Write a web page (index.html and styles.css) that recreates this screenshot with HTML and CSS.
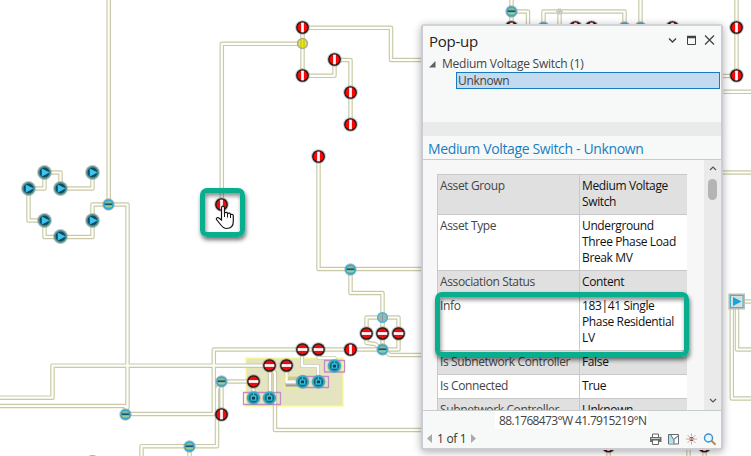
FILE: index.html
```html
<!DOCTYPE html>
<html lang="en">
<head>
<meta charset="utf-8">
<title>Network map</title>
<link rel="stylesheet" href="styles.css">
</head>
<body>
<main class="stage">
<svg class="map" width="751" height="456" viewBox="0 0 751 456">
  <defs>
    <g id="open"><circle r="7.3" class="halo"/><circle r="5.7" fill="#f80808" stroke="#181818" stroke-width="1.3"/><path d="M0-4.8V4.8" stroke="#fff" stroke-width="2.7"/></g>
    <g id="closed"><circle r="7.3" class="halo"/><circle r="5.7" fill="#f80808" stroke="#181818" stroke-width="1.3"/><path d="M-4.8 0H4.8" stroke="#fff" stroke-width="2.7"/></g>
    <g id="arrow"><circle r="7.4" class="halo"/><circle r="5.7" fill="#174952" stroke="#4d9499" stroke-width="1.5"/><path d="M-2.7-4L5 0L-2.7 4Z" fill="#38c5fa"/></g>
    <g id="junction"><circle r="6.2" class="halo"/><circle r="4.5" fill="#83b79a" stroke="#25a9d8" stroke-width="1.5"/><path d="M-3.7-.3H3.7" stroke="#15506c" stroke-width="1.5"/><path d="M-3.5 2H3.5" stroke="#98cd92" stroke-width="1"/></g>
    <g id="meter"><circle r="7.1" class="halo"/><circle r="5.6" fill="#176274" stroke="#2caccb" stroke-width="1.7"/><path d="M-2.2-2H2.2V2.2H-2.2ZM0-5V-2" fill="#103d4a" stroke="#36bfe0" stroke-width="1.3"/></g>
    <g id="pipes">
      <path d="M302.5 27.8H391V60H425M302.5 43.8H221.8V204M302.5 27.5V75.8H334.5V60H350.5V124M318.5 156V269H425M350.5 269V293H382.5V317M366.5 333V317.5H398.5V349.5H382.5V317M366.5 333V343L375 344L382.5 349.5L390 355H425"/>
      <path d="M382.5 349.5H213.8V414H125.5M108.7 0V204.5H127.5V407L125.5 414M0 406H125.5V414"/>
      <path d="M0 397.7H52.5V365.7H270V398M270 366L275 373V430H425M221.5 381.5L217 389V446.2H141.5V456M189.5 446V456M221.5 381.5V414M221.5 381.5H253.5V398"/>
      <path d="M28.5 188.5H44.5V172.5H60.5V188.5H92.5V172.5M28.5 188.5V220.5H44.5V237H92.5V204.5H108.5"/>
      <path d="M511.5 0V26M511.5 11.5H528V26M543.5 26V11.5H624.5V26M559.5 11.5V26M640.5 0V26M736.5 0V76H721M755 91.8H723.5M721 172.5H755M608.5 448V456M688.5 448V456M704.5 448V456M755 301.5H737V349.5H755M731.8 302V398.5H755"/>
    </g>
  </defs>
  <rect x="246" y="358" width="97" height="48" class="substation"/>
  <use href="#pipes" class="pipe-edge"/>
  <use href="#pipes" class="pipe-core"/>
  <g class="thin-edge"><path d="M302 350V366H318V381M318.5 350V358H334.5V366M286.5 366V384H302M286.5 378H302"/></g>
  <g class="thin-core"><path d="M302 350V366H318V381M318.5 350V358H334.5V366M286.5 366V382H302"/></g>
  <path d="M303 376H284V388H303" fill="none" stroke="#f3f27d"/>
  <path d="M286 385.5H302" stroke="#9c9d98" stroke-width="2"/>
  <g class="container"><path d="M247 392.5H243.5V404.5H247M247 392.5H280.5V404.5H247M303 376.5H328.5V387.5H303M324.5 360.5H344.5V372H324.5Z"/></g>

  <g>
    <use href="#open" x="302.5" y="27.5"/><use href="#open" x="302.5" y="75.5"/><use href="#open" x="334.5" y="59.5"/><use href="#open" x="350.5" y="92.5"/><use href="#open" x="350.5" y="124.5"/><use href="#open" x="318.5" y="156.5"/><use href="#open" x="221.5" y="204.5"/><use href="#open" x="350.5" y="349.5"/><use href="#open" x="221.5" y="414.5"/>
    <use href="#open" x="736.5" y="27.5"/><use href="#open" x="736.5" y="75.5"/><use href="#open" x="511.5" y="27.5"/><use href="#open" x="575.5" y="27.5"/><use href="#open" x="591.5" y="27.5"/><use href="#open" x="672.5" y="27.5"/><use href="#open" x="608.5" y="446"/><use href="#open" x="704.5" y="446"/>
    <use href="#closed" x="366.5" y="333.5"/><use href="#closed" x="382.5" y="333.5"/><use href="#closed" x="398.5" y="333.5"/><use href="#closed" x="302.5" y="349.5"/><use href="#closed" x="318.5" y="349.5"/><use href="#closed" x="269.5" y="365.5"/><use href="#closed" x="286.5" y="365.5"/><use href="#closed" x="253.5" y="381.5"/>
    <use href="#arrow" x="28.5" y="188.5"/><use href="#arrow" x="44.5" y="172.5"/><use href="#arrow" x="60.5" y="188.5"/><use href="#arrow" x="92.5" y="172.5"/><use href="#arrow" x="92.5" y="220.5"/><use href="#arrow" x="60.5" y="236.5"/><use href="#arrow" x="44.5" y="220.5"/>
    <use href="#junction" x="108.5" y="204.5"/><use href="#junction" x="350.5" y="269.5"/><use href="#junction" x="382.5" y="349.5"/><use href="#junction" x="221.5" y="381.5"/><use href="#junction" x="125.5" y="414.5"/><use href="#junction" x="189.5" y="446.5"/><use href="#junction" x="511.5" y="11.5"/><use href="#junction" x="543.5" y="27.5"/><use href="#junction" x="624.5" y="27.5"/><use href="#junction" x="640.5" y="27.5"/>
    <use href="#meter" x="253.5" y="398"/><use href="#meter" x="269.5" y="398"/><use href="#meter" x="302.5" y="381.8"/><use href="#meter" x="318.5" y="381.8"/><use href="#meter" x="334.5" y="366"/>
  </g>
  <circle cx="302.5" cy="43.5" r="4.8" fill="#eeee18" stroke="#aaaaa2" stroke-width="1.7"/><path d="M301 40V47M304 40V47" stroke="#b5b51f"/>
  <circle cx="382.5" cy="317.5" r="4.8" fill="#9fb5a7" stroke="#47b4d9" stroke-width="1.5"/><path d="M382.5 314V321" stroke="#7d9c9c"/>
  <path d="M556 11.5L558 8.500H561L563 11.500L561 14.500H558Z" fill="#c5cebc"/>
  <path d="M88.500 456Q92.500 454 96.500 456" fill="#aaa"/>
  <rect x="728.5" y="293.5" width="16.5" height="16" fill="#b9bebc"/><rect x="730.5" y="295.5" width="12.5" height="12" fill="#d5dfdb" stroke="#49b5bd"/><path d="M733 297L741.5 301.500L733 306Z" fill="#18a3df"/>
</svg>

<section class="popup">
  <header class="titlebar"><h1>Pop-up</h1>
    <svg width="50" height="16" viewBox="0 0 50 16" fill="none" stroke="#404040"><path d="M2 5.500L5.500 9L9 5.500" stroke-width="1.400"/><path d="M20.500 4H28.500V11.500H20.500Z"/><path d="M20 4H29" stroke-width="2.500"/><path d="M38 2.500L47 11.500M47 2.500L38 11.500" stroke-width="1.200"/></svg>
  </header>
  <div class="tree">
    <div class="tree-parent"><svg width="7" height="7"><path d="M6.500 0V6.500H0Z" fill="#616161"/></svg><span>Medium Voltage Switch (1)</span></div>
    <div class="tree-item"><span>Unknown</span></div>
  </div>
  <div class="splitter"></div>
  <h2><span>Medium Voltage Switch - Unknown</span></h2>
  <div class="content">
    <div class="scroll-view">
      <dl class="fields">
        <dt>Asset Group</dt><dd>Medium Voltage<br>Switch</dd>
        <dt class="alt">Asset Type</dt><dd class="alt">Underground<br>Three Phase Load<br>Break MV</dd>
        <dt>Association Status</dt><dd>Content</dd>
        <dt class="alt">Info</dt><dd class="alt">183|41 Single<br>Phase Residential<br>LV</dd>
        <dt>Is Subnetwork Controller</dt><dd>False</dd>
        <dt class="alt">Is Connected</dt><dd class="alt">True</dd>
        <dt>Subnetwork Controller</dt><dd>Unknown</dd>
      </dl>
    </div>
    <div class="scrollbar">
      <svg width="8" height="5"><path d="M1 4L4 1L7 4" fill="none" stroke="#555" stroke-width="1.200"/></svg>
      <div class="thumb"></div>
      <svg width="8" height="5"><path d="M1 1L4 4L7 1" fill="none" stroke="#555" stroke-width="1.200"/></svg>
    </div>
  </div>
  <footer>
    <div class="coords"><span>88.1768473°W 41.7915219°N</span></div>
    <div class="actions">
      <div class="pager"><svg width="5" height="9"><path d="M5 0V9L0 4.500Z" fill="#aaa"/></svg><span>1 of 1</span><svg width="5" height="9"><path d="M0 0V9L5 4.500Z" fill="#aaa"/></svg></div>
      <svg width="68" height="14" viewBox="0 0 68 14" fill="none">
        <path d="M3.500 5V2H9.500V5" fill="#fff" stroke="#666"/><path d="M1 5H12.500V10H1Z" fill="#6a6e71"/><path d="M3.500 8H9.500V12.500H3.500Z" fill="#fff" stroke="#666"/><path d="M2 6.500H11" stroke="#c4c7c9"/>
        <path d="M19.500 2.500H29.500V12H19.500Z" fill="#fff" stroke="#65696b"/><path d="M20 3H22L24 7L29 4V5L25 9V11.500H20Z" fill="#ade1f1"/><path d="M21.500 2.500L24.500 7.500L29.500 3.500M25 12V8" stroke="#65696b"/>
        <path d="M37 7H40M45 7H48M42.500 1.500V4.500M42.500 9.500V12.500M38.500 3L40.500 5M46.500 3L44.500 5M38.500 11L40.500 9M46.500 11L44.500 9" stroke="#e0a095"/><path d="M41 5.500H44V8.500H41Z" stroke="#8a5c54"/><path d="M42 6.500H43V7.500H42Z" fill="#333"/>
        <path d="M62.500 8.800L66.500 12.800" stroke="#b98b4b" stroke-width="2"/><circle cx="59.500" cy="6" r="4" fill="#e9f7fd" stroke="#3c91cf" stroke-width="1.500"/>
      </svg>
    </div>
  </footer>
</section>
<div class="callout callout-switch"></div>
<div class="callout callout-info"></div>
<svg class="cursor" width="20" height="26" viewBox="0 0 20 26"><path d="M6.500 3.200Q6.500 1.200 8 1.200T9.500 3.200V7.800Q12.200 6.500 12.500 8.500Q15.200 7.300 15.500 9.500Q18.300 8.800 18.300 11V16.500C18.300 21 15.500 23.500 11.500 23.500C8.500 23.500 7 21.500 5.500 19.500L1.500 14.500C.7 12.800 3 12 4.200 13.200L6.500 15Z" fill="#fff" stroke="#161616" stroke-width="1.200"/><path d="M9.500 7.500V12M12.500 8.500V12.500M15.500 9.500V13" stroke="#161616"/></svg>
</main>
</body>
</html>
```
FILE: styles.css
```css
* { box-sizing: border-box; }
body { margin: 0; overflow: hidden; background: #fff; font: 12px/16px "Open Sans", "Noto Sans", sans-serif; color: #444; }
.stage { position: relative; width: 751px; height: 456px; overflow: hidden; }
.map { display: block; }
.map path { stroke-linejoin: round; }
.halo { fill: #959595; fill-opacity: .6; }
.pipe-edge { fill: none; stroke: #c9c9a8; stroke-width: 4.5; }
.pipe-core { fill: none; stroke: #fdfdfa; stroke-width: 2.2; }
.substation { fill: #e4e4c0; stroke: #fafa88; stroke-width: 1.3; }
.thin-edge { fill: none; stroke: #c8c8af; stroke-width: 4; }
.thin-core { fill: none; stroke: #fff; stroke-width: 2.4; }
.container { fill: none; stroke: #c18bc9; stroke-width: 1.3; }
.popup { position: absolute; left: 421px; top: 24px; width: 302px; height: 426px; display: flex; flex-direction: column; border: 2px solid #cbccd3; border-top-color: #d1d3d7; border-radius: 3px; background: #f7f9f8; box-shadow: 0 2px 8px rgba(0,0,0,.32); }
.titlebar { height: 30px; display: flex; align-items: center; justify-content: space-between; padding: 0 4px 0 6px; }
h1, h2 { margin: 0; font-weight: 400; }
h1 { font-size: 15px; letter-spacing: -.25px; color: #222; }
.tree { height: 66px; }
.tree-parent { height: 16px; display: flex; align-items: center; padding-left: 6px; gap: 6px; letter-spacing: -.24px; }
.tree-item { height: 17px; margin: 0 1px 0 33px; padding-left: 1px; border: 1px solid #167bc0; background: #c4daee; line-height: 15px; letter-spacing: -.33px; }
.splitter { height: 14px; background: #eaeaea; }
h2 { height: 24px; padding-left: 5px; border-bottom: 1px solid #c5cccb; font-size: 14px; line-height: 25px; color: #187dc2; letter-spacing: -.36px; }
.content { height: 250px; display: flex; overflow: hidden; }
.scroll-view { flex: 1; overflow: hidden; padding: 14px 0 0 14px; background: #f7f7f7; }
.fields { width: 250px; margin: 0; display: grid; grid-template-columns: 142px 108px; border-top: 1px solid #c9c9c9; border-right: 1px solid #c9c9c9; letter-spacing: -.37px; }
dt, dd { margin: 0; padding: 3px 0 4px 2px; border-left: 1px solid #c9c9c9; border-bottom: 1px solid #c9c9c9; background: #e0e0e0; white-space: nowrap; }
dd { color: #111; }
.fields .alt { background: #fff; }
.scrollbar { width: 17px; display: flex; flex-direction: column; align-items: center; padding: 6px 0 7px; background: #eaeaea; }
.thumb { width: 9px; height: 21px; margin: 8px 0 auto; border-radius: 5px; background: #b4b4b4; }
footer { height: 38px; border-top: 1px solid #c7cbca; }
.coords { width: 153px; height: 18px; margin-left: 72px; padding-left: 4px; line-height: 20px; background: #fff; letter-spacing: -.64px; white-space: nowrap; }
.actions { height: 19px; display: flex; align-items: center; justify-content: space-between; padding: 0 4px; }
.pager { display: flex; align-items: center; gap: 5px; color: #333; letter-spacing: -.3px; }
.callout { position: absolute; border: 5px solid #08ae8e; border-radius: 7px; box-shadow: 1px 3px 4px rgba(0,0,0,.55), inset 1px 3px 4px rgba(0,0,0,.45); }
.callout-switch { left: 200px; top: 188px; width: 45px; height: 49px; }
.callout-info { left: 435px; top: 292px; width: 254px; height: 65px; }
.cursor { position: absolute; left: 215px; top: 205px; }
```
